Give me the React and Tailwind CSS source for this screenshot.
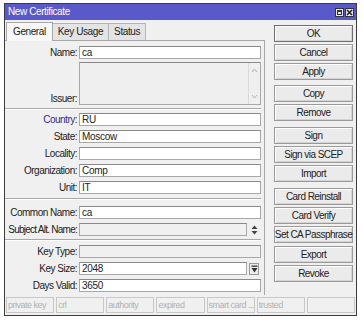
import React from "react";

const F = "font-['Liberation_Sans',Arial,sans-serif]";

function Btn({ children, def }) {
  return (
    <div
      className={`h-[17px] flex items-center justify-center border ${
        def ? "border-[#6e6e6e]" : "border-[#9a9a9a]"
      } bg-[#ebebeb] shadow-[inset_1px_1px_0_#ffffff,inset_-1px_-1px_0_#d4d4d4] text-[10px] leading-none tracking-[-0.55px] whitespace-nowrap text-[#222]`}
    >
      {children}
    </div>
  );
}

function Label({ children, blue, tight }) {
  return (
    <div
      className={`w-[74px] shrink-0 pr-[2px] flex justify-end whitespace-nowrap text-[10px] leading-none ${
        tight ? "tracking-[-0.75px]" : "tracking-[-0.5px]"
      } ${blue ? "text-[#2c2c9c]" : "text-[#222]"}`}
    >
      {children}
    </div>
  );
}

function Input({ value, disabled, className = "" }) {
  return (
    <div
      className={`h-[13px] shrink-0 flex items-center pl-[2px] border border-[#a8a8a8] border-t-[#8a8a8a] text-[10px] leading-none tracking-[-0.3px] text-[#222] ${
        disabled ? "bg-[#f0f0f0]" : "bg-white"
      } ${className}`}
    >
      {value}
    </div>
  );
}

function Row({ label, value, blue, disabled, mt = "mt-[4px]", right, tight }) {
  return (
    <div className={`flex items-center h-[13px] ${mt}`}>
      <Label blue={blue} tight={tight}>{label}</Label>
      {right ? (
        <div className="flex items-center w-[182px]">
          <Input value={value} disabled={disabled} className="w-[168px]" />
          <div className="flex-1 flex justify-center">{right}</div>
        </div>
      ) : (
        <Input value={value} disabled={disabled} className="w-[182px]" />
      )}
    </div>
  );
}

function Sep({ mt }) {
  return (
    <div className={`${mt} h-[2px] border-t border-[#a8a8a8] border-b border-b-white`} />
  );
}

const SpinIcon = (
  <svg width="7" height="10" viewBox="0 0 7 10">
    <polygon points="0.5,4 3.5,0.5 6.5,4" fill="#444" />
    <polygon points="0.5,6 6.5,6 3.5,9.5" fill="#444" />
  </svg>
);

const DropIcon = (
  <div className="w-[10px] h-[12px] border border-[#9a9a9a] bg-[#ececec] flex items-center justify-center">
    <svg width="7" height="8" viewBox="0 0 7 8">
      <rect x="0.5" y="0.5" width="6" height="1.3" fill="#333" />
      <polygon points="0.5,3 6.5,3 3.5,7.5" fill="#333" />
    </svg>
  </div>
);

export default function App() {
  const buttons = [
    ["OK", "mt-0", true],
    ["Cancel", "mt-[2px]"],
    ["Apply", "mt-[2px]"],
    ["Copy", "mt-[5px]"],
    ["Remove", "mt-[2px]"],
    ["Sign", "mt-[6px]"],
    ["Sign via SCEP", "mt-[2px]"],
    ["Import", "mt-[2px]"],
    ["Card Reinstall", "mt-[6px]"],
    ["Card Verify", "mt-[2px]"],
    ["Set CA Passphrase", "mt-[2px]"],
    ["Export", "mt-[3px]"],
    ["Revoke", "mt-[2px]"],
  ];
  const status = ["private key", "crl", "authority", "expired", "smart card ...", "trusted", ""];

  return (
    <div className={`w-[363px] h-[320px] bg-white overflow-hidden pt-[3px] pl-[4px] ${F}`}>
      <div className="w-[353px] h-[313px] border border-[#3c3c3c] bg-[#f0f0f0] flex flex-col">
        {/* title bar */}
        <div className="h-[16px] shrink-0 bg-[#5959c9] flex items-center justify-between pl-[3px] pr-[2px]">
          <span className="text-white text-[10px] leading-none tracking-[-0.4px]">New Certificate</span>
          <div className="flex gap-[1px]">
            <div className="w-[9px] h-[9px] bg-[#e6e6e6] border border-[#333] flex items-center justify-center">
              <div className="w-[5px] h-[5px] border border-[#333] border-t-2" />
            </div>
            <div className="w-[9px] h-[9px] bg-[#e6e6e6] border border-[#333] flex items-center justify-center">
              <svg width="7" height="7" viewBox="0 0 7 7">
                <path d="M1 1 L6 6 M6 1 L1 6" stroke="#222" strokeWidth="1.6" />
              </svg>
            </div>
          </div>
        </div>

        {/* main */}
        <div className="flex flex-1 min-h-0">
          {/* left */}
          <div className="w-[260px] flex flex-col">
            <div className="flex items-end h-[20px] pl-[1px] shrink-0">
              <div className="h-[19px] px-[6px] flex items-center bg-[#f7f7f7] border border-b-0 border-[#a8a8a8] text-[10px] leading-none tracking-[-0.4px] text-[#222] relative top-[1px]">
                General
              </div>
              <div className="h-[17px] px-[5px] flex items-center bg-[#e4e4e4] border border-l-0 border-b-0 border-[#b4b4b4] text-[10px] leading-none tracking-[-0.4px] text-[#222]">
                Key Usage
              </div>
              <div className="h-[17px] px-[5px] flex items-center bg-[#e4e4e4] border border-l-0 border-b-0 border-[#b4b4b4] text-[10px] leading-none tracking-[-0.4px] text-[#222]">
                Status
              </div>
            </div>
            <div className="border-t border-r border-[#a8a8a8] pt-[5px] pb-[3px] pr-[3px]">
              <Row label="Name:" value="ca" mt="mt-0" />
              <div className="flex mt-[3px]">
                <div className="w-[74px] shrink-0 pr-[2px] text-right text-[10px] leading-none tracking-[-0.5px] text-[#222] self-end pb-[1px]">
                  Issuer:
                </div>
                <div className="w-[182px] h-[43px] border border-[#a8a8a8] border-t-[#8a8a8a] bg-[#efefef] flex">
                  <div className="flex-1" />
                  <div className="w-[12px] border-l border-[#dadada] flex flex-col items-center justify-between py-[5px]">
                    <svg width="7" height="5" viewBox="0 0 7 5">
                      <path d="M1 4 L3.5 1 L6 4" stroke="#b0b0b0" fill="none" strokeWidth="1" />
                    </svg>
                    <svg width="7" height="5" viewBox="0 0 7 5">
                      <path d="M1 1 L3.5 4 L6 1" stroke="#b0b0b0" fill="none" strokeWidth="1" />
                    </svg>
                  </div>
                </div>
              </div>
              <Sep mt="mt-[3px]" />
              <Row label="Country:" value="RU" blue mt="mt-[3px]" />
              <Row label="State:" value="Moscow" />
              <Row label="Locality:" value="" />
              <Row label="Organization:" value="Comp" />
              <Row label="Unit:" value="IT" />
              <Sep mt="mt-[4px]" />
              <Row label="Common Name:" value="ca" mt="mt-[6px]" />
              <Row label="Subject Alt. Name:" value="" disabled right={SpinIcon} tight />
              <Sep mt="mt-[3px]" />
              <Row label="Key Type:" value="" disabled mt="mt-[4px]" />
              <Row label="Key Size:" value="2048" right={DropIcon} />
              <Row label="Days Valid:" value="3650" />
            </div>
          </div>

          {/* right buttons */}
          <div className="w-[79px] ml-[9px] pt-[5px] flex flex-col">
            {buttons.map(([t, mt, d]) => (
              <div key={t} className={mt}>
                <Btn def={d}>{t}</Btn>
              </div>
            ))}
          </div>
        </div>

        {/* status bar */}
        <div className="flex gap-[2px] px-[1px] pb-[2px] pt-[1px] shrink-0">
          {status.map((s, i) => (
            <div
              key={i}
              className="flex-1 min-w-0 h-[16px] border border-[#c8c8c8] flex items-center pl-[1px] text-[9px] leading-none tracking-[-0.5px] text-[#b0b0b0] whitespace-nowrap overflow-hidden"
            >
              {s}
            </div>
          ))}
        </div>
      </div>
    </div>
  );
}
